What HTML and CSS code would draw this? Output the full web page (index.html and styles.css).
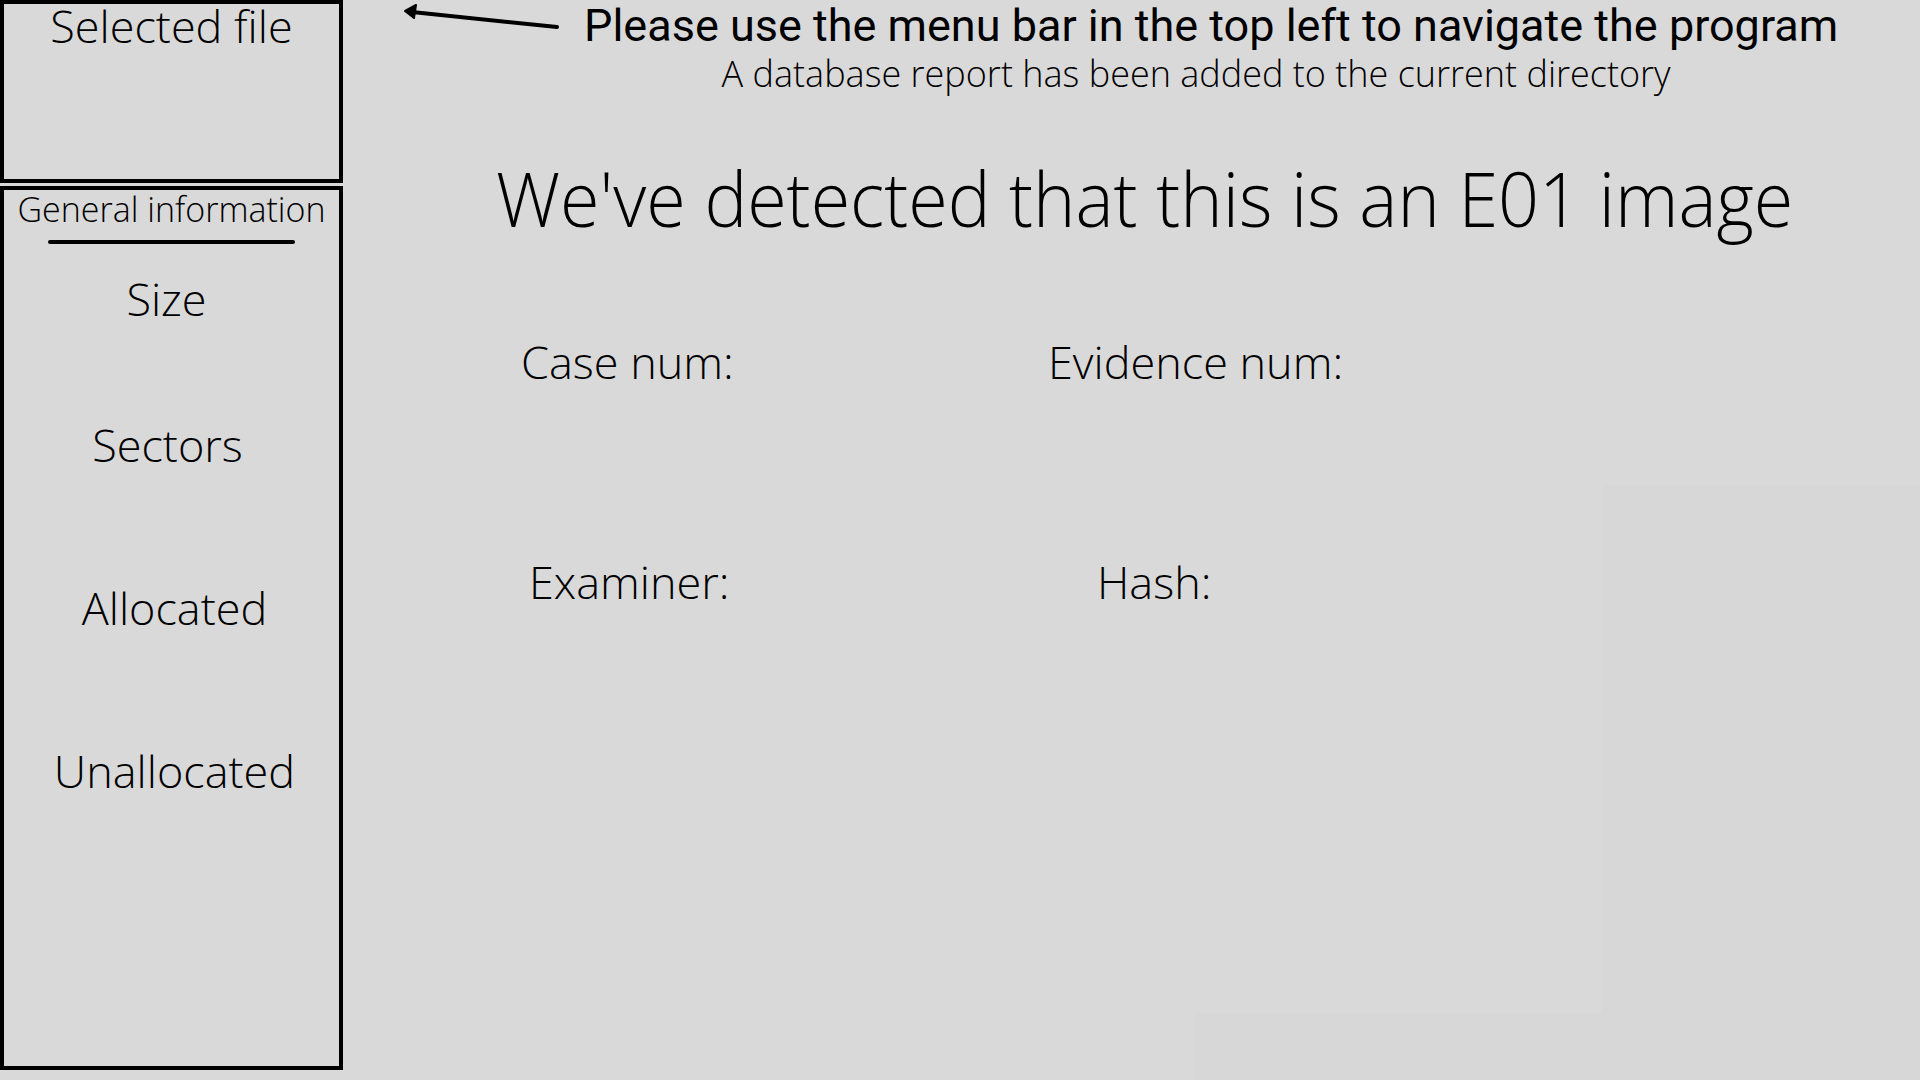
FILE: index.html
```html
<!DOCTYPE html>
<html lang="en">
<head>
<meta charset="utf-8">
<title>E01 image</title>
<link rel="stylesheet" href="styles.css">
</head>
<body>
<div class="app">
  <aside class="sidebar">
    <section class="box box-file">
      <div class="file-title">Selected file</div>
    </section>
    <section class="box box-info">
      <div class="info-title">General information</div>
      <div class="info-rule"></div>
      <div class="info-item item-size">Size</div>
      <div class="info-item item-sectors">Sectors</div>
      <div class="info-item item-alloc">Allocated</div>
      <div class="info-item item-unalloc">Unallocated</div>
    </section>
  </aside>
  <main class="main">
    <header class="hint">
      <svg class="arrow" width="160" height="30" viewBox="0 0 160 30">
        <path d="M155 23 L10 8" stroke="#000" stroke-width="4" stroke-linecap="round" fill="none"/>
        <path d="M3 7 L14 1 L12 14 Z" fill="#000" stroke="#000" stroke-width="2" stroke-linejoin="round"/>
      </svg>
      <div class="hint-text">
        <div class="hint-main">Please use the menu bar in the top left to navigate the program</div>
        <div class="hint-sub">A database report has been added to the current directory</div>
      </div>
    </header>
    <h1 class="headline">We've detected that this is an E01 image</h1>
    <div class="fields">
      <div class="field f-case">Case num:</div>
      <div class="field f-evidence">Evidence num:</div>
      <div class="field f-examiner">Examiner:</div>
      <div class="field f-hash">Hash:</div>
    </div>
  </main>
</div>
</body>
</html>
```
FILE: styles.css
```css
html, body {
  margin: 0;
  padding: 0;
  background-color: #d9d9d9;
}
body {
  width: 1920px;
  height: 1080px;
  overflow: hidden;
  font-family: "Open Sans", "Liberation Sans", sans-serif;
  font-weight: 300;
  color: #000;
  background-image:
    linear-gradient(#d7d7d7, #d7d7d7),
    linear-gradient(#d7d7d7, #d7d7d7);
  background-repeat: no-repeat;
  background-position: 1602px 485px, 1194px 1013px;
  background-size: 318px 595px, 408px 67px;
}
.app {
  display: flex;
  height: 1080px;
}
.sidebar {
  width: 343px;
  display: flex;
  flex-direction: column;
  flex-shrink: 0;
}
.box {
  border: 4px solid #000;
  box-sizing: border-box;
}
.box-file {
  height: 183px;
}
.box-info {
  height: 884px;
  margin-top: 3px;
  display: flex;
  flex-direction: column;
  align-items: center;
}
.file-title {
  text-align: center;
  font-size: 45px;
  line-height: 44px;
  margin-top: 0;
}
.info-title {
  font-size: 34px;
  line-height: 40px;
  margin-top: -1px;
}
.info-rule {
  width: 247px;
  height: 4px;
  border-radius: 2px;
  background: #000;
  margin-top: 11px;
}
.info-item {
  font-size: 45px;
  line-height: 60px;
}
.item-size { margin-top: 25px; margin-left: -10px; }
.item-sectors { margin-top: 86px; margin-left: -8px; }
.item-alloc { margin-top: 103px; margin-left: 6px; }
.item-unalloc { margin-top: 103px; margin-left: 6px; }

.main {
  flex: 1;
  display: flex;
  flex-direction: column;
}
.hint {
  display: flex;
  align-items: flex-start;
  padding-left: 59px;
}
.arrow {
  margin-top: 4px;
}
.hint-text {
  margin-left: 22px;
  display: flex;
  flex-direction: column;
  align-items: center;
}
.hint-main {
  font-family: Roboto, "Liberation Sans", sans-serif;
  font-weight: 400;
  font-size: 45px;
  line-height: 52px;
}
.hint-sub {
  font-size: 36px;
  line-height: 44px;
  margin-top: 0;
  margin-right: 30px;
}
.headline {
  margin: 52px 0 0 153px;
  font-weight: 300;
  font-size: 76px;
  line-height: 100px;
  transform: scaleX(0.945);
  transform-origin: left center;
  white-space: nowrap;
}
.fields {
  display: grid;
  grid-template-columns: 527px 1fr;
  row-gap: 160px;
  padding-left: 178px;
  margin-top: 84px;
}
.field {
  font-size: 45px;
  line-height: 60px;
}
.f-examiner { margin-left: 8px; }
.f-hash { margin-left: 49px; }
```
